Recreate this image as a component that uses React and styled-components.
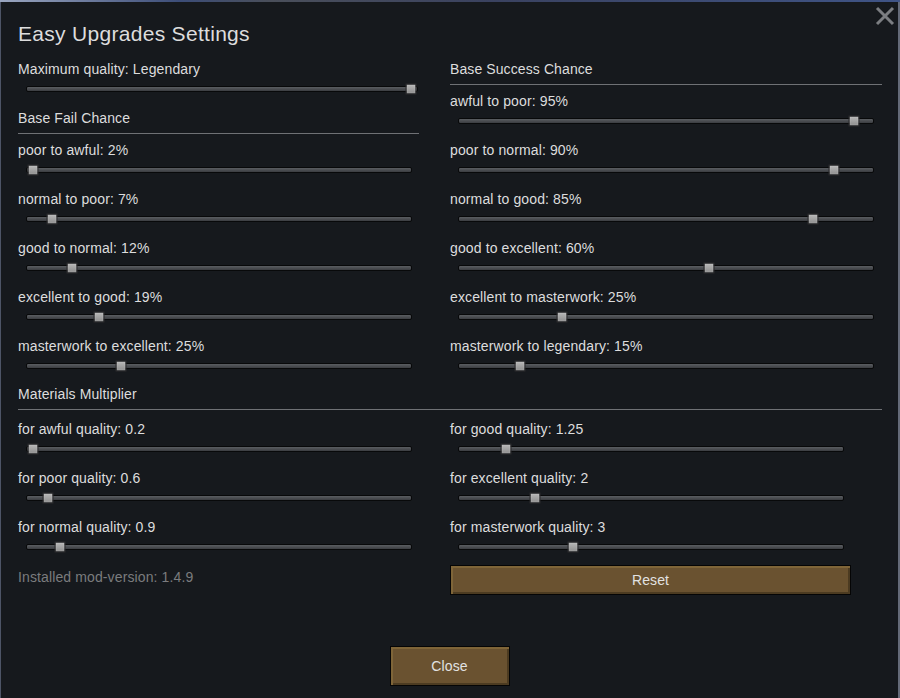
import React from 'react';
import styled, { createGlobalStyle } from 'styled-components';

const GlobalStyle = createGlobalStyle`
  html, body {
    margin: 0;
    padding: 0;
    background: #16191d;
    font-family: "Liberation Sans", Arial, sans-serif;
  }
`;

const Page = styled.div`
  width: 900px;
  height: 698px;
  display: flex;
  flex-direction: column;
  background: linear-gradient(90deg, #9aa6c0 0, #3c4d78 20%, #4a4f5a 30%, #3a4260 55%, #3f5486 100%);
  overflow: hidden;
`;

const Window = styled.div`
  margin-top: 2px;
  flex: 1;
  position: relative;
  background: #16191d;
  border-left: 1px solid #4d5466;
  border-right: 2px solid #646a78;
  padding: 0 0 0 17px;
  color: #dddddd;
  display: flex;
  flex-direction: column;
`;

const CloseX = styled.div`
  position: absolute;
  top: 3px;
  right: 2px;
  width: 22px;
  height: 22px;
  color: #7c7e82;
`;

const Title = styled.div`
  font-size: 21px;
  letter-spacing: 0.3px;
  line-height: 28px;
  margin-top: 18px;
  margin-bottom: 10px;
`;

const Columns = styled.div`
  display: grid;
  grid-template-columns: ${p => p.cols};
  column-gap: 31px;
  width: 864px;
`;

const Col = styled.div`
  display: flex;
  flex-direction: column;
`;

const Header = styled.div`
  font-size: 14px;
  letter-spacing: 0.1px;
  line-height: 22px;
  padding-bottom: 4px;
  border-bottom: 1px solid #6f7175;
  margin-top: ${p => p.$top || 0}px;
  margin-bottom: ${p => p.$bottom || 5}px;
`;

const Row = styled.div`
  display: flex;
  flex-direction: column;
`;

const Label = styled.div`
  font-size: 14px;
  letter-spacing: 0.12px;
  line-height: 22px;
  white-space: nowrap;
`;

const SliderBox = styled.div`
  height: 27px;
  padding: 6px ${p => p.$right}px 0 8px;
  box-sizing: border-box;
`;

const Track = styled.div`
  position: relative;
  height: 4px;
  border: 1px solid #08090a;
  border-radius: 2px;
  background: linear-gradient(#5a5d61, #3b3d41);
`;

const Thumb = styled.div`
  position: absolute;
  top: 50%;
  width: 9px;
  height: 9px;
  transform: translate(-50%, -50%);
  border: 1px solid #2a2b2d;
  background: linear-gradient(#b8b8b8, #8e8e8e);
  box-shadow: inset 0 0 0 1px rgba(255, 255, 255, 0.15);
`;

const Bottom = styled.div`
  display: grid;
  grid-template-columns: 401px 401px;
  column-gap: 31px;
  align-items: center;
  height: 30px;
`;

const Version = styled.div`
  font-size: 14px;
  letter-spacing: 0.12px;
  color: #7b7c7e;
  margin-top: -6px;
`;

const Button = styled.button`
  font-family: "Liberation Sans", Arial, sans-serif;
  font-size: 14px;
  letter-spacing: 0.1px;
  color: #e2e2e2;
  width: ${p => p.$w}px;
  height: ${p => p.$h}px;
  background: #6a5230;
  border: 1px solid #050505;
  box-shadow: inset 2px 2px 0 #7f6538, inset -2px -2px 0 #4c3b21;
  padding: 0;
  cursor: pointer;
`;

const Footer = styled.div`
  display: flex;
  justify-content: center;
  padding-right: 17px;
  margin-top: 51px;
`;

const Slider = ({ label, pos, right = 7 }) => (
  <Row>
    <Label>{label}</Label>
    <SliderBox $right={right}>
      <Track>
        <Thumb style={{ left: `${pos * 100}%` }} />
      </Track>
    </SliderBox>
  </Row>
);

const fail = [
  ['poor to awful: 2%', 0.016],
  ['normal to poor: 7%', 0.065],
  ['good to normal: 12%', 0.117],
  ['excellent to good: 19%', 0.187],
  ['masterwork to excellent: 25%', 0.246],
];

const success = [
  ['awful to poor: 95%', 0.955],
  ['poor to normal: 90%', 0.905],
  ['normal to good: 85%', 0.855],
  ['good to excellent: 60%', 0.603],
  ['excellent to masterwork: 25%', 0.249],
  ['masterwork to legendary: 15%', 0.147],
];

const matLeft = [
  ['for awful quality: 0.2', 0.016],
  ['for poor quality: 0.6', 0.054],
  ['for normal quality: 0.9', 0.085],
];

const matRight = [
  ['for good quality: 1.25', 0.122],
  ['for excellent quality: 2', 0.197],
  ['for masterwork quality: 3', 0.298],
];

export default function App() {
  return (
    <>
      <GlobalStyle />
      <Page>
        <Window>
          <CloseX>
            <svg width="22" height="22" viewBox="0 0 22 22">
              <path d="M3 3 L19 19 M19 3 L3 19" stroke="currentColor" strokeWidth="3" />
            </svg>
          </CloseX>
          <Title>Easy Upgrades Settings</Title>
          <Columns cols="401px 432px">
            <Col>
              <Slider label="Maximum quality: Legendary" pos={0.985} right={1} />
              <Header>Base Fail Chance</Header>
              {fail.map(([l, p]) => (
                <Slider key={l} label={l} pos={p} />
              ))}
            </Col>
            <Col>
              <Header>Base Success Chance</Header>
              {success.map(([l, p]) => (
                <Slider key={l} label={l} pos={p} right={8} />
              ))}
            </Col>
          </Columns>
          <Columns cols="864px">
            <Header $top={-1} $bottom={8}>Materials Multiplier</Header>
          </Columns>
          <Columns cols="401px 401px">
            <Col>
              {matLeft.map(([l, p]) => (
                <Slider key={l} label={l} pos={p} />
              ))}
            </Col>
            <Col>
              {matRight.map(([l, p]) => (
                <Slider key={l} label={l} pos={p} />
              ))}
            </Col>
          </Columns>
          <Bottom>
            <Version>Installed mod-version: 1.4.9</Version>
            <Button $w={401} $h={30}>Reset</Button>
          </Bottom>
          <Footer>
            <Button $w={120} $h={40}>Close</Button>
          </Footer>
        </Window>
      </Page>
    </>
  );
}
